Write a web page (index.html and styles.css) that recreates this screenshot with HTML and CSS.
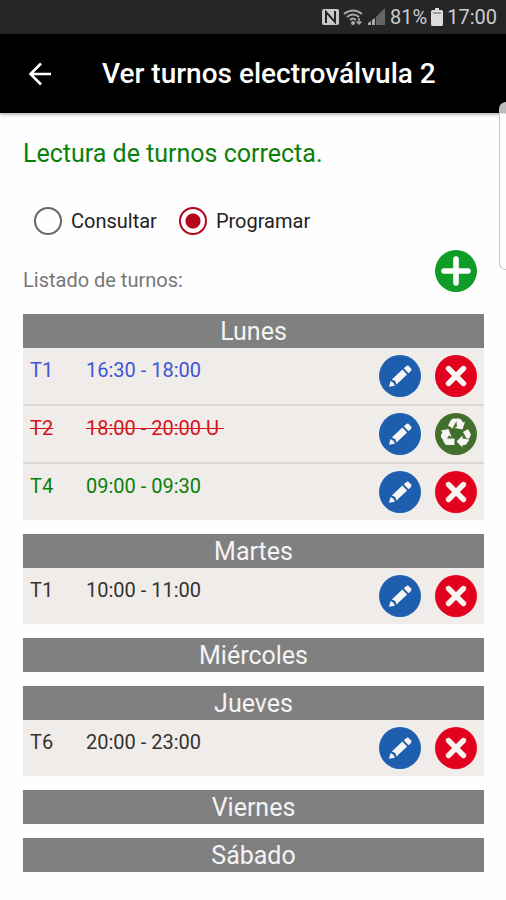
FILE: index.html
```html
<!DOCTYPE html>
<html lang="es">
<head>
    <meta charset="UTF-8">
    <meta name="viewport" content="width=device-width, initial-scale=1.0">
    <title>Ver turnos electroválvula 2</title>
    <link rel="stylesheet" href="styles.css">
</head>
<body>

<!-- Iconos compartidos -->
<svg class="sprite" aria-hidden="true">
    <symbol id="icon-edit" viewBox="0 0 42 42">
        <g transform="translate(21 21.500) rotate(-43)">
            <path d="M-15 0L-10 -3.200L-9 0L-10 3.200Z"/>
            <path d="M-8 -3.400H6.500V3.400H-8L-6.500 0Z"/>
            <path d="M8.500 -3.400H11.500Q13.500 -3.400 13.500 -2V2Q13.500 3.400 11.500 3.400H8.500Z"/>
        </g>
    </symbol>
    <symbol id="icon-delete" viewBox="0 0 42 42">
        <path d="M13.500 13.500L28.500 28.500M28.500 13.500L13.500 28.500" stroke="currentColor" stroke-width="5.400" stroke-linecap="round"/>
    </symbol>
    <symbol id="icon-recycle" viewBox="0 0 42 42">
        <path d="M13 12.500L16 7Q17 5.500 19 5.500H20.500L22 7L17.500 15.500Z"/>
        <path d="M21 5.500H24Q25.500 5.500 26.500 7L28 9.500L30 8.500L27.500 16.500L19.500 15L22 13.500Z"/>
        <path d="M28 19L33 16L35.500 20.500Q36.300 22.200 35 24L34 25.500H31.500Z"/>
        <path d="M34.500 26.500L31.500 31Q30.700 32 29 32H27.500V34.500L21.500 28.500L27.500 22.500V25.500Z"/>
        <path d="M19.500 25.500V32H12Q10.500 32 10 31L8 27.500L9.500 25.500Z"/>
        <path d="M8 27L6 24Q5.500 22.500 6.500 21L7.500 19L5.500 17.500L13.500 16L16.500 24L14 22.500L12 25.500Z"/>
    </symbol>
</svg>

<div class="status-bar">
    <svg width="17" height="18" viewBox="0 0 17 18">
        <rect x="0" y="1" width="17" height="16" rx="2" fill="#c8c8c8"/>
        <path d="M4 15V4L13 14V3" fill="none" stroke="#262626" stroke-width="2"/>
    </svg>
    <svg width="21" height="18" viewBox="0 0 21 18" fill="none" stroke="#aaa" stroke-width="2">
        <path d="M1 6Q10 -1 19 6M4 9Q10 4 16 9M7 12Q10 9 13 12"/>
        <circle cx="10" cy="15" r="1" fill="#aaa"/>
        <path d="M16 10V16M13.500 13.500L16 16L18.500 13.500" stroke-width="1.500"/>
    </svg>
    <svg width="18" height="18" viewBox="0 0 18 18" fill="#aaa">
        <path d="M0 17V15L3 13V17ZM4 17V12L7 10V17Z"/>
        <path d="M8 17V9L17 0V17Z" fill="#666"/>
    </svg>
    <span>81%</span>
    <svg width="12" height="18" viewBox="0 0 12 18">
        <path d="M4 0H8V2H10.500Q12 2 12 3.500V16.500Q12 18 10.500 18H1.500Q0 18 0 16.500V3.500Q0 2 1.500 2H4Z" fill="#ddd"/>
        <path d="M2 5H10" stroke="#888" stroke-width="1.500"/>
    </svg>
    <span>17:00</span>
</div>

<header class="toolbar">
    <a class="back" href="#" aria-label="Volver">
        <svg width="24" height="24" viewBox="0 0 24 24" fill="none" stroke="currentColor" stroke-width="2.600">
            <path d="M23 12H3M13 1.500L2.500 12L13 22.500"/>
        </svg>
    </a>
    <h1>Ver turnos electroválvula 2</h1>
</header>

<div class="edge-handle"></div>

<main class="content">
    <p class="message">Lectura de turnos correcta.</p>

    <div class="modes">
        <label><input type="radio" name="modo"> Consultar</label>
        <label><input type="radio" name="modo" checked> Programar</label>
    </div>

    <div class="list-head">
        <span>Listado de turnos:</span>
        <button class="round add" type="button" aria-label="Añadir turno">
            <svg viewBox="0 0 42 42"><path d="M21 9V33M9 21H33" stroke="currentColor" stroke-width="5.600" stroke-linecap="round"/></svg>
        </button>
    </div>

    <!-- Turnos por día -->
    <div class="days">
        <section>
            <h2>Lunes</h2>
            <table>
                <tr class="blue">
                    <td class="shift">T1</td>
                    <td>16:30 - 18:00</td>
                    <td class="actions">
                        <div class="buttons">
                            <button class="round edit" type="button" aria-label="Editar"><svg><use href="#icon-edit"/></svg></button>
                            <button class="round delete" type="button" aria-label="Eliminar"><svg><use href="#icon-delete"/></svg></button>
                        </div>
                    </td>
                </tr>
                <tr class="removed">
                    <td class="shift"><s>T2</s></td>
                    <td><s>18:00 - 20:00 U&nbsp;</s></td>
                    <td class="actions">
                        <div class="buttons">
                            <button class="round edit" type="button" aria-label="Editar"><svg><use href="#icon-edit"/></svg></button>
                            <button class="round recycle" type="button" aria-label="Recuperar"><svg><use href="#icon-recycle"/></svg></button>
                        </div>
                    </td>
                </tr>
                <tr class="green">
                    <td class="shift">T4</td>
                    <td>09:00 - 09:30</td>
                    <td class="actions">
                        <div class="buttons">
                            <button class="round edit" type="button" aria-label="Editar"><svg><use href="#icon-edit"/></svg></button>
                            <button class="round delete" type="button" aria-label="Eliminar"><svg><use href="#icon-delete"/></svg></button>
                        </div>
                    </td>
                </tr>
            </table>
        </section>

        <section>
            <h2>Martes</h2>
            <table>
                <tr>
                    <td class="shift">T1</td>
                    <td>10:00 - 11:00</td>
                    <td class="actions">
                        <div class="buttons">
                            <button class="round edit" type="button" aria-label="Editar"><svg><use href="#icon-edit"/></svg></button>
                            <button class="round delete" type="button" aria-label="Eliminar"><svg><use href="#icon-delete"/></svg></button>
                        </div>
                    </td>
                </tr>
            </table>
        </section>

        <section>
            <h2>Miércoles</h2>
        </section>

        <section>
            <h2>Jueves</h2>
            <table>
                <tr>
                    <td class="shift">T6</td>
                    <td>20:00 - 23:00</td>
                    <td class="actions">
                        <div class="buttons">
                            <button class="round edit" type="button" aria-label="Editar"><svg><use href="#icon-edit"/></svg></button>
                            <button class="round delete" type="button" aria-label="Eliminar"><svg><use href="#icon-delete"/></svg></button>
                        </div>
                    </td>
                </tr>
            </table>
        </section>

        <section>
            <h2>Viernes</h2>
        </section>

        <section>
            <h2>Sábado</h2>
        </section>
    </div>
</main>

</body>
</html>
```

FILE: styles.css
```css
* {
    margin: 0;
    padding: 0;
    box-sizing: border-box;
}
body {
    position: relative;
    font-family: Roboto, "Liberation Sans", sans-serif;
    font-size: 20px;
    line-height: 24px;
    color: #333;
    background-color: #fefefe;
}
svg {
    display: block;
}
.sprite {
    display: none;
}
.status-bar {
    display: flex;
    justify-content: flex-end;
    align-items: center;
    gap: 4px;
    height: 34px;
    padding: 0 9px;
    background-color: #262626;
    color: #ccc;
}
.toolbar {
    display: flex;
    align-items: center;
    gap: 50px;
    height: 79px;
    padding: 0 28px;
    background-color: #000;
    color: #fff;
    box-shadow: 0 1px 4px rgba(0, 0, 0, 0.4);
}
.toolbar h1 {
    font-size: 28px;
    line-height: 32px;
    font-weight: 500;
}
.back {
    color: #fff;
}
/* Pestaña del panel lateral */
.edge-handle {
    position: absolute;
    top: 102px;
    right: 0;
    width: 7px;
    height: 168px;
    border: 1px solid #c4c4c4;
    border-right: none;
    border-radius: 8px 0 0 8px;
    background: linear-gradient(#bbb 10px, #fefefe 11px);
}
.content {
    padding: 25px 22px 24px 23px;
}
.message {
    font-size: 25px;
    line-height: 32px;
    color: #0a800a;
}
.modes {
    display: flex;
    gap: 22px;
    padding: 36px 11px 0;
}
.modes label {
    display: flex;
    align-items: center;
    gap: 9px;
    height: 30px;
    color: #222;
}
.modes input {
    appearance: none;
    width: 28px;
    height: 28px;
    border: 2px solid #666;
    border-radius: 50%;
}
.modes input:checked {
    border-color: #b4061c;
    background: radial-gradient(circle, #b4061c 7px, transparent 8px);
}
.list-head {
    display: flex;
    justify-content: space-between;
    align-items: flex-end;
    padding: 14px 7px 22px 0;
    color: #777;
}
.round {
    width: 42px;
    height: 42px;
    border: none;
    border-radius: 50%;
    color: #f7f5f3;
    cursor: pointer;
}
.round svg {
    width: 42px;
    height: 42px;
    fill: currentColor;
}
.add {
    background-color: #0f9d27;
    color: #fff;
}
.edit {
    background-color: #1d5fae;
}
.delete {
    background-color: #e2001f;
}
.recycle {
    background-color: #426f2b;
}
.days {
    display: flex;
    flex-direction: column;
    gap: 14px;
}
.days h2 {
    padding-top: 2px;
    font-size: 25px;
    line-height: 32px;
    font-weight: 400;
    text-align: center;
    color: #f4f4f4;
    background-color: #808080;
}
table {
    width: 100%;
    border-collapse: collapse;
    background-color: #efece9;
}
tr + tr {
    border-top: 2px solid #dad7d5;
}
td {
    height: 56px;
    padding-top: 10px;
    vertical-align: top;
}
.shift {
    width: 63px;
    padding-left: 7px;
}
.actions {
    width: 105px;
    padding: 7px 7px 7px 0;
}
.buttons {
    display: flex;
    gap: 14px;
}
.blue {
    color: #3d55d6;
}
.removed {
    color: #d3141c;
}
.removed s {
    text-decoration-thickness: 1px;
}
.green {
    color: #0a800a;
}
```
